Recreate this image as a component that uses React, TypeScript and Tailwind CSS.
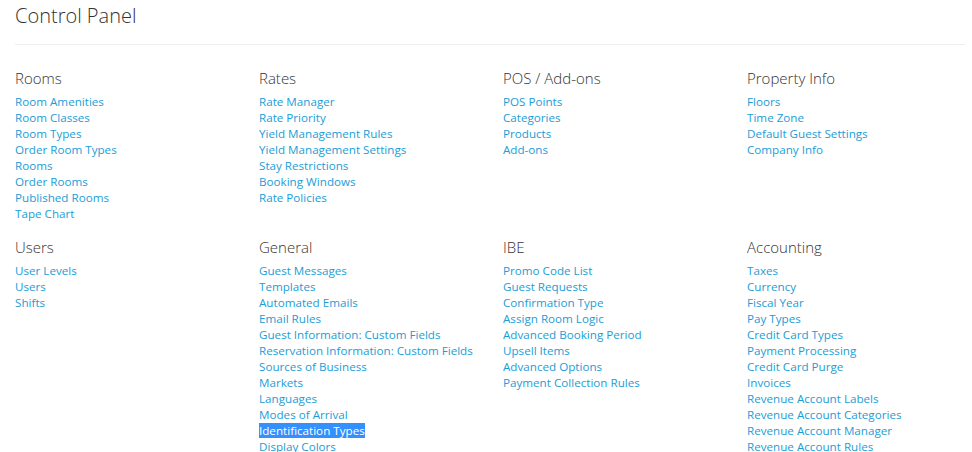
// Control Panel — settings index
// Four columns of link groups, two rows, thin rule under the title

interface Section {
  title: string;
  links: string[];
}

const topRow: Section[] = [
  {
    title: "Rooms",
    links: [
      "Room Amenities",
      "Room Classes",
      "Room Types",
      "Order Room Types",
      "Rooms",
      "Order Rooms",
      "Published Rooms",
      "Tape Chart",
    ],
  },
  {
    title: "Rates",
    links: [
      "Rate Manager",
      "Rate Priority",
      "Yield Management Rules",
      "Yield Management Settings",
      "Stay Restrictions",
      "Booking Windows",
      "Rate Policies",
    ],
  },
  {
    title: "POS / Add-ons",
    links: ["POS Points", "Categories", "Products", "Add-ons"],
  },
  {
    title: "Property Info",
    links: ["Floors", "Time Zone", "Default Guest Settings", "Company Info"],
  },
];

const bottomRow: Section[] = [
  {
    title: "Users",
    links: ["User Levels", "Users", "Shifts"],
  },
  {
    title: "General",
    links: [
      "Guest Messages",
      "Templates",
      "Automated Emails",
      "Email Rules",
      "Guest Information: Custom Fields",
      "Reservation Information: Custom Fields",
      "Sources of Business",
      "Markets",
      "Languages",
      "Modes of Arrival",
      "Identification Types",
      "Display Colors",
    ],
  },
  {
    title: "IBE",
    links: [
      "Promo Code List",
      "Guest Requests",
      "Confirmation Type",
      "Assign Room Logic",
      "Advanced Booking Period",
      "Upsell Items",
      "Advanced Options",
      "Payment Collection Rules",
    ],
  },
  {
    title: "Accounting",
    links: [
      "Taxes",
      "Currency",
      "Fiscal Year",
      "Pay Types",
      "Credit Card Types",
      "Payment Processing",
      "Credit Card Purge",
      "Invoices",
      "Revenue Account Labels",
      "Revenue Account Categories",
      "Revenue Account Manager",
      "Revenue Account Rules",
    ],
  },
];

// the one item that shows as text-selected in the screenshot
const SELECTED = "Identification Types";

function LinkGroup({ section }: { section: Section }) {
  return (
    <div className="w-[244px] shrink-0">
      <h3 className="text-[15px] leading-[20px] font-light text-[#333]">{section.title}</h3>
      <ul className="mt-[6px]">
        {section.links.map((link) => (
          <li key={link} className="text-[11.65px] leading-[16px] whitespace-nowrap">
            <a
              href="#"
              className={
                link === SELECTED
                  ? "bg-[#3390fe] text-white"
                  : "text-[#1a9dd6] hover:underline"
              }
            >
              {link}
            </a>
          </li>
        ))}
      </ul>
    </div>
  );
}

export default function App() {
  return (
    <div
      className="h-[452px] overflow-hidden bg-white px-[15px] pt-[5px]"
      style={{ fontFamily: "'Open Sans', 'Noto Sans', sans-serif" }}
    >
      <h1 className="text-[20px] leading-[22px] font-light text-[#333]">Control Panel</h1>
      <hr className="mt-[17px] w-[950px] border-t border-[#eee]" />

      <div className="mt-[23px] flex">
        {topRow.map((s) => (
          <LinkGroup key={s.title} section={s} />
        ))}
      </div>
      <div className="mt-[15px] flex">
        {bottomRow.map((s) => (
          <LinkGroup key={s.title} section={s} />
        ))}
      </div>
    </div>
  );
}
